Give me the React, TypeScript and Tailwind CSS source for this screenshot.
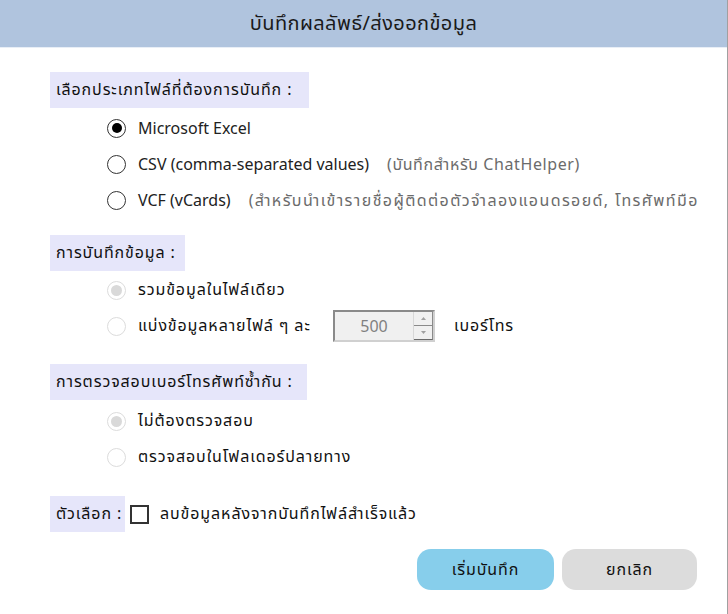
import React from "react";

const thai = "font-['Tahoma','Noto_Sans_Thai','Noto_Sans','DejaVu_Sans',sans-serif] tracking-[0.9px]";
const ui = "font-['Noto_Sans','Open_Sans','Noto_Sans_Thai',sans-serif]";

function Radio({ checked, disabled }: { checked?: boolean; disabled?: boolean }) {
  if (disabled) {
    return (
      <span className="w-[19px] h-[19px] rounded-full border border-[#dcdcdc] flex items-center justify-center shrink-0">
        {checked && <span className="w-[11px] h-[11px] rounded-full bg-[#d9d9d9]" />}
      </span>
    );
  }
  return (
    <span className="w-[19px] h-[19px] rounded-full border-[1.5px] border-[#333] flex items-center justify-center shrink-0">
      {checked && <span className="w-[10px] h-[10px] rounded-full bg-black" />}
    </span>
  );
}

function Header({ children, w }: { children: React.ReactNode; w: string }) {
  return (
    <div className={`h-[36px] ${w} bg-[#e6e6fa] flex items-center pl-[6px] whitespace-nowrap text-[16px] text-[#111] ${thai}`}>
      {children}
    </div>
  );
}

function Row({ children }: { children: React.ReactNode }) {
  return <div className="h-[36px] w-[650px] overflow-hidden flex items-center pl-[57px] whitespace-nowrap">{children}</div>;
}

export default function App() {
  return (
    <div className="w-[728px] h-[614px] bg-white relative overflow-hidden border-r border-[#a0a0a0]">
      <div className={`h-[47px] bg-[#b0c4de] flex items-center justify-center text-[20px] text-[#1a1a1a] font-['Tahoma','Noto_Sans_Thai',sans-serif] tracking-[0.4px]`}>
        บันทึกผลลัพธ์/ส่งออกข้อมูล
      </div>
      <div className="h-px bg-[#e8eef6]" />
      <div className="pl-[50px] pt-[24px]">
        <Header w="w-[259px]">เลือกประเภทไฟล์ที่ต้องการบันทึก :</Header>
        <div className="mt-[2px]">
          <Row>
            <Radio checked />
            <span className={`ml-[12px] text-[16px] text-[#222] ${ui}`}>Microsoft Excel</span>
          </Row>
          <Row>
            <Radio />
            <span className={`ml-[12px] text-[16px] text-[#222] ${ui}`}>CSV (comma-separated values)</span>
            <span className={`ml-[18px] text-[16px] text-[#6b6b6b] tracking-[0.6px] ${ui}`}>(บันทึกสำหรับ ChatHelper)</span>
          </Row>
          <Row>
            <Radio />
            <span className={`ml-[12px] text-[16px] text-[#222] ${ui}`}>VCF (vCards)</span>
            <span className={`ml-[18px] text-[16px] text-[#6b6b6b] tracking-[1.4px] ${ui}`}>(สำหรับนำเข้ารายชื่อผู้ติดต่อตัวจำลองแอนดรอยด์, โทรศัพท์มือ</span>
          </Row>
        </div>

        <div className="mt-[17px]">
          <Header w="w-[135px]">การบันทึกข้อมูล :</Header>
        </div>
        <div className="mt-[1px]">
          <Row>
            <Radio checked disabled />
            <span className={`ml-[12px] text-[16px] text-[#111] ${thai}`}>รวมข้อมูลในไฟล์เดียว</span>
          </Row>
          <Row>
            <Radio disabled />
            <span className={`ml-[12px] text-[16px] text-[#111] w-[195px] shrink-0 ${thai}`}>แบ่งข้อมูลหลายไฟล์ ๆ ละ</span>
            <div className="w-[102px] h-[32px] flex shrink-0 border-2 border-t-[#8a8a8a] border-l-[#8a8a8a] border-r-[#d0d0d0] border-b-[#d0d0d0] bg-[#f0f0f0]">
              <div className={`flex-1 flex items-center justify-center text-[16px] text-[#808080] ${ui}`}>500</div>
              <div className="w-[20px] flex flex-col border-l border-[#d8d8d8]">
                <div className="flex-1 flex items-center justify-center border-b border-r border-b-[#8a8a8a] border-r-[#8a8a8a]">
                  <svg width="5" height="3" viewBox="0 0 5 3"><path d="M0 3 L2.5 0 L5 3Z" fill="#a0a0a0" /></svg>
                </div>
                <div className="flex-1 flex items-center justify-center border-b border-r border-b-[#6a6a6a] border-r-[#8a8a8a]">
                  <svg width="5" height="3" viewBox="0 0 5 3"><path d="M0 0 L2.5 3 L5 0Z" fill="#a0a0a0" /></svg>
                </div>
              </div>
            </div>
            <span className={`ml-[19px] text-[16px] text-[#111] ${thai}`}>เบอร์โทร</span>
          </Row>
        </div>

        <div className="mt-[20px]">
          <Header w="w-[257px]">การตรวจสอบเบอร์โทรศัพท์ซ้ำกัน :</Header>
        </div>
        <div className="mt-[3px]">
          <Row>
            <Radio checked disabled />
            <span className={`ml-[12px] text-[16px] text-[#111] ${thai}`}>ไม่ต้องตรวจสอบ</span>
          </Row>
          <Row>
            <Radio disabled />
            <span className={`ml-[12px] text-[16px] text-[#111] ${thai}`}>ตรวจสอบในโฟลเดอร์ปลายทาง</span>
          </Row>
        </div>

        <div className="mt-[21px] flex items-center">
          <Header w="w-[75px]">ตัวเลือก :</Header>
          <span className="ml-[5px] w-[19px] h-[19px] border-2 border-[#333] bg-white shrink-0" />
          <span className={`ml-[11px] text-[16px] text-[#111] ${thai}`}>ลบข้อมูลหลังจากบันทึกไฟล์สำเร็จแล้ว</span>
        </div>
      </div>

      <div className="flex gap-[8px] pl-[417px] mt-[17px]">
        <button className={`w-[137px] h-[41px] rounded-[14px] bg-[#87ceeb] text-[16px] text-[#111] ${thai}`}>เริ่มบันทึก</button>
        <button className={`w-[135px] h-[41px] rounded-[14px] bg-[#dcdcdc] text-[16px] text-[#111] ${thai}`}>ยกเลิก</button>
      </div>
    </div>
  );
}
